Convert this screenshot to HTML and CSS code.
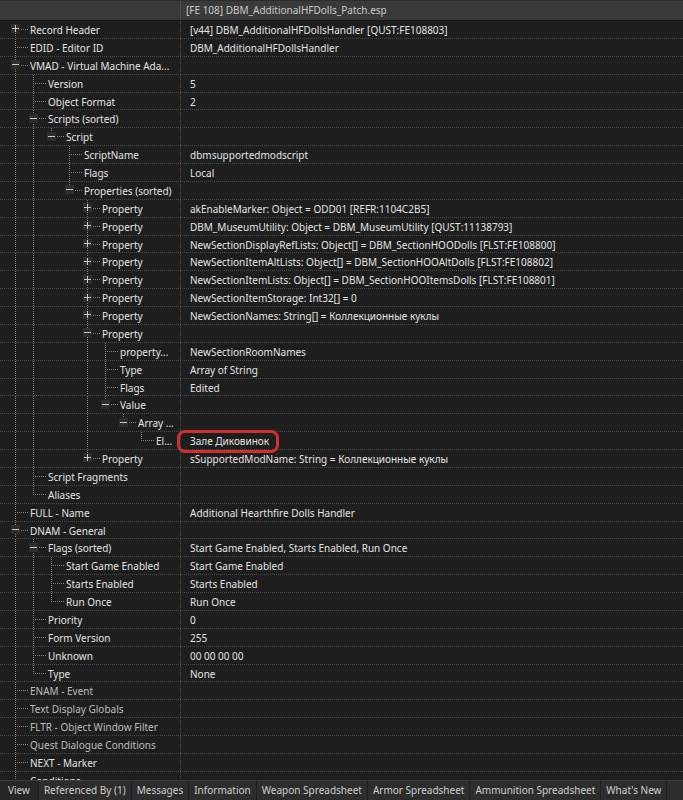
FILE: index.html
```html
<!DOCTYPE html>
<html>
<head>
<meta charset="utf-8">
<link rel="stylesheet" href="styles.css">
</head>
<body>
<div class="app">
  <div class="head">
    <div class="hname"></div>
    <div class="hval">[FE 108] DBM_AdditionalHFDolls_Patch.esp</div>
  </div>
  <div class="tree">
    <div class="row"><div class="name"><i class="c f"><b class="x p"></b></i><span>Record Header</span></div><div class="val">[v44] DBM_AdditionalHFDollsHandler [QUST:FE108803]</div></div>
    <div class="row"><div class="name"><i class="c m"></i><span>EDID - Editor ID</span></div><div class="val">DBM_AdditionalHFDollsHandler</div></div>
    <div class="row"><div class="name"><i class="c m"><b class="x n"></b></i><span>VMAD - Virtual Machine Ada...</span></div><div class="val"></div></div>
    <div class="row"><div class="name"><i class="g v"></i><i class="c m"></i><span>Version</span></div><div class="val">5</div></div>
    <div class="row"><div class="name"><i class="g v"></i><i class="c m"></i><span>Object Format</span></div><div class="val">2</div></div>
    <div class="row"><div class="name"><i class="g v"></i><i class="c m"><b class="x n"></b></i><span>Scripts (sorted)</span></div><div class="val"></div></div>
    <div class="row"><div class="name"><i class="g v"></i><i class="g v"></i><i class="c l"><b class="x n"></b></i><span>Script</span></div><div class="val"></div></div>
    <div class="row"><div class="name"><i class="g v"></i><i class="g v"></i><i class="g"></i><i class="c m"></i><span>ScriptName</span></div><div class="val">dbmsupportedmodscript</div></div>
    <div class="row"><div class="name"><i class="g v"></i><i class="g v"></i><i class="g"></i><i class="c m"></i><span>Flags</span></div><div class="val">Local</div></div>
    <div class="row"><div class="name"><i class="g v"></i><i class="g v"></i><i class="g"></i><i class="c l"><b class="x n"></b></i><span>Properties (sorted)</span></div><div class="val"></div></div>
    <div class="row"><div class="name"><i class="g v"></i><i class="g v"></i><i class="g"></i><i class="g"></i><i class="c m"><b class="x p"></b></i><span>Property</span></div><div class="val">akEnableMarker: Object = ODD01 [REFR:1104C2B5]</div></div>
    <div class="row"><div class="name"><i class="g v"></i><i class="g v"></i><i class="g"></i><i class="g"></i><i class="c m"><b class="x p"></b></i><span>Property</span></div><div class="val">DBM_MuseumUtility: Object = DBM_MuseumUtility [QUST:11138793]</div></div>
    <div class="row"><div class="name"><i class="g v"></i><i class="g v"></i><i class="g"></i><i class="g"></i><i class="c m"><b class="x p"></b></i><span>Property</span></div><div class="val">NewSectionDisplayRefLists: Object[] = DBM_SectionHOODolls [FLST:FE108800]</div></div>
    <div class="row"><div class="name"><i class="g v"></i><i class="g v"></i><i class="g"></i><i class="g"></i><i class="c m"><b class="x p"></b></i><span>Property</span></div><div class="val">NewSectionItemAltLists: Object[] = DBM_SectionHOOAltDolls [FLST:FE108802]</div></div>
    <div class="row"><div class="name"><i class="g v"></i><i class="g v"></i><i class="g"></i><i class="g"></i><i class="c m"><b class="x p"></b></i><span>Property</span></div><div class="val">NewSectionItemLists: Object[] = DBM_SectionHOOItemsDolls [FLST:FE108801]</div></div>
    <div class="row"><div class="name"><i class="g v"></i><i class="g v"></i><i class="g"></i><i class="g"></i><i class="c m"><b class="x p"></b></i><span>Property</span></div><div class="val">NewSectionItemStorage: Int32[] = 0</div></div>
    <div class="row"><div class="name"><i class="g v"></i><i class="g v"></i><i class="g"></i><i class="g"></i><i class="c m"><b class="x p"></b></i><span>Property</span></div><div class="val">NewSectionNames: String[] = Коллекционные куклы</div></div>
    <div class="row"><div class="name"><i class="g v"></i><i class="g v"></i><i class="g"></i><i class="g"></i><i class="c m"><b class="x n"></b></i><span>Property</span></div><div class="val"></div></div>
    <div class="row"><div class="name"><i class="g v"></i><i class="g v"></i><i class="g"></i><i class="g"></i><i class="g v"></i><i class="c m"></i><span>property...</span></div><div class="val">NewSectionRoomNames</div></div>
    <div class="row"><div class="name"><i class="g v"></i><i class="g v"></i><i class="g"></i><i class="g"></i><i class="g v"></i><i class="c m"></i><span>Type</span></div><div class="val">Array of String</div></div>
    <div class="row"><div class="name"><i class="g v"></i><i class="g v"></i><i class="g"></i><i class="g"></i><i class="g v"></i><i class="c m"></i><span>Flags</span></div><div class="val">Edited</div></div>
    <div class="row"><div class="name"><i class="g v"></i><i class="g v"></i><i class="g"></i><i class="g"></i><i class="g v"></i><i class="c l"><b class="x n"></b></i><span>Value</span></div><div class="val"></div></div>
    <div class="row"><div class="name"><i class="g v"></i><i class="g v"></i><i class="g"></i><i class="g"></i><i class="g v"></i><i class="g"></i><i class="c l"><b class="x n"></b></i><span>Array ...</span></div><div class="val"></div></div>
    <div class="row"><div class="name"><i class="g v"></i><i class="g v"></i><i class="g"></i><i class="g"></i><i class="g v"></i><i class="g"></i><i class="g"></i><i class="c l"></i><span>El...</span></div><div class="val open"><span class="mark">Зале Диковинок</span></div></div>
    <div class="row"><div class="name"><i class="g v"></i><i class="g v"></i><i class="g"></i><i class="g"></i><i class="c l"><b class="x p"></b></i><span>Property</span></div><div class="val">sSupportedModName: String = Коллекционные куклы</div></div>
    <div class="row"><div class="name"><i class="g v"></i><i class="c m"></i><span>Script Fragments</span></div><div class="val"></div></div>
    <div class="row"><div class="name"><i class="g v"></i><i class="c l"></i><span>Aliases</span></div><div class="val"></div></div>
    <div class="row"><div class="name"><i class="c m"></i><span>FULL - Name</span></div><div class="val">Additional Hearthfire Dolls Handler</div></div>
    <div class="row"><div class="name"><i class="c m"><b class="x n"></b></i><span>DNAM - General</span></div><div class="val"></div></div>
    <div class="row"><div class="name"><i class="g v"></i><i class="c m"><b class="x n"></b></i><span>Flags (sorted)</span></div><div class="val">Start Game Enabled, Starts Enabled, Run Once</div></div>
    <div class="row"><div class="name"><i class="g v"></i><i class="g v"></i><i class="c m"></i><span>Start Game Enabled</span></div><div class="val">Start Game Enabled</div></div>
    <div class="row"><div class="name"><i class="g v"></i><i class="g v"></i><i class="c m"></i><span>Starts Enabled</span></div><div class="val">Starts Enabled</div></div>
    <div class="row"><div class="name"><i class="g v"></i><i class="g v"></i><i class="c l"></i><span>Run Once</span></div><div class="val">Run Once</div></div>
    <div class="row"><div class="name"><i class="g v"></i><i class="c m"></i><span>Priority</span></div><div class="val">0</div></div>
    <div class="row"><div class="name"><i class="g v"></i><i class="c m"></i><span>Form Version</span></div><div class="val">255</div></div>
    <div class="row"><div class="name"><i class="g v"></i><i class="c m"></i><span>Unknown</span></div><div class="val">00 00 00 00</div></div>
    <div class="row"><div class="name"><i class="g v"></i><i class="c l"></i><span>Type</span></div><div class="val">None</div></div>
    <div class="row dim"><div class="name"><i class="c m"></i><span>ENAM - Event</span></div><div class="val"></div></div>
    <div class="row dim"><div class="name"><i class="c m"></i><span>Text Display Globals</span></div><div class="val"></div></div>
    <div class="row dim"><div class="name"><i class="c m"></i><span>FLTR - Object Window Filter</span></div><div class="val"></div></div>
    <div class="row dim"><div class="name"><i class="c m"></i><span>Quest Dialogue Conditions</span></div><div class="val"></div></div>
    <div class="row"><div class="name"><i class="c m"></i><span>NEXT - Marker</span></div><div class="val"></div></div>
    <div class="row"><div class="name"><i class="c m"></i><span>Conditions</span></div><div class="val"></div></div>
  </div>
  <div class="tabs">
    <div class="tab sel">View</div>
    <div class="tab">Referenced By (1)</div>
    <div class="tab">Messages</div>
    <div class="tab">Information</div>
    <div class="tab">Weapon Spreadsheet</div>
    <div class="tab">Armor Spreadsheet</div>
    <div class="tab">Ammunition Spreadsheet</div>
    <div class="tab">What's New</div>
  </div>
</div>
</body>
</html>
```

FILE: styles.css
```css
html, body {
  margin: 0;
  padding: 0;
  background: #1e1e1e;
}
.app {
  width: 683px;
  height: 800px;
  display: flex;
  flex-direction: column;
  overflow: hidden;
  font-family: "Noto Sans", "Open Sans", sans-serif;
  font-size: 10px;
  color: #e4e4e4;
  background: #1e1e1e;
}
.head {
  flex: none;
  height: 21px;
  box-sizing: border-box;
  display: grid;
  grid-template-columns: 180px 1fr;
  background: #3a3a3a;
  border-top: 1px solid #2c2c2c;
  border-bottom: 1px solid #181818;
}
.hval {
  border-left: 1px solid #4c4c4c;
  padding-left: 5px;
  line-height: 19px;
  color: #cbcbcb;
  white-space: nowrap;
  overflow: hidden;
}
.tree {
  flex: 1;
  overflow: hidden;
}
.row {
  height: 17.88px;
  box-sizing: border-box;
  display: grid;
  grid-template-columns: 180px 1fr;
  border-bottom: 1px dotted #4a4a4a;
}
.name {
  display: flex;
  align-items: stretch;
  padding-left: 6px;
  overflow: hidden;
  white-space: nowrap;
}
.name span {
  margin-left: 2px;
  line-height: 18px;
}
.val {
  border-left: 1px dotted #4a4a4a;
  padding-left: 9px;
  line-height: 18px;
  white-space: nowrap;
  overflow: hidden;
}
.val.open {
  overflow: visible;
}
.dim .name span {
  color: #bdbdbd;
}
.g, .c {
  flex: none;
  display: flex;
  align-items: center;
  background-repeat: no-repeat;
}
.g {
  width: 18px;
}
.g.v {
  background-image: repeating-linear-gradient(to bottom, #808080 0 1px, transparent 1px 2px);
  background-size: 1px 100%;
  background-position: 9px 0;
}
.c {
  width: 22px;
  padding-left: 5px;
  box-sizing: border-box;
  --vl: repeating-linear-gradient(to bottom, #808080 0 1px, transparent 1px 2px);
  --hl: repeating-linear-gradient(to right, #808080 0 1px, transparent 1px 2px);
}
.c.m {
  background-image: var(--vl), var(--hl);
  background-size: 1px 100%, 11px 1px;
  background-position: 9px 0, 11px 8px;
}
.c.f {
  background-image: var(--vl), var(--hl);
  background-size: 1px 50%, 11px 1px;
  background-position: 9px 100%, 11px 8px;
}
.c.l {
  background-image: var(--vl), var(--hl);
  background-size: 1px 9px, 11px 1px;
  background-position: 9px 0, 11px 8px;
}
.x {
  width: 9px;
  height: 9px;
  background-color: #2e2e2e;
  background-repeat: no-repeat;
  margin-top: -1px;
}
.x.p {
  background-image: linear-gradient(#c8c8c8, #c8c8c8), linear-gradient(#c8c8c8, #c8c8c8);
  background-size: 7px 1px, 1px 7px;
  background-position: 1px 4px, 4px 1px;
}
.x.n {
  background-image: linear-gradient(#c8c8c8, #c8c8c8);
  background-size: 7px 1px;
  background-position: 1px 4px;
}
.mark {
  display: inline-block;
  height: 17px;
  line-height: 17px;
  padding: 0 7px 0 10px;
  margin-left: -10px;
  outline: 3px solid #d0302b;
  border-radius: 5px;
}
.tabs {
  flex: none;
  height: 20px;
  box-sizing: border-box;
  display: flex;
  background: #2d2d2d;
  border-top: 1px solid #3e3e3e;
}
.tab {
  padding: 0 5px;
  line-height: 19px;
  color: #cfcfcf;
  border-right: 1px solid #1f1f1f;
  white-space: nowrap;
}
.tab.sel {
  padding: 0 8px;
  background: #262626;
}
```
